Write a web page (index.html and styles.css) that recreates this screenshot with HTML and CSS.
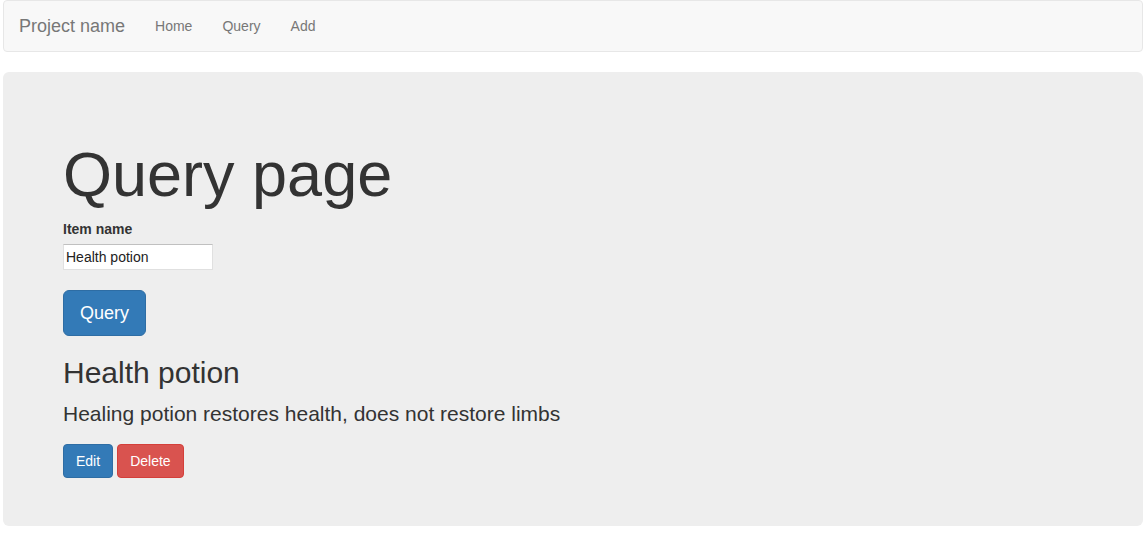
FILE: index.html
```html
<!DOCTYPE html>
<html>
<head>
<meta charset="utf-8">
<title>Query page</title>
<link rel="stylesheet" href="styles.css">
</head>
<body>
<div class="page">
  <nav class="navbar">
    <a class="brand" href="#">Project name</a>
    <ul class="nav">
      <li><a href="#">Home</a></li>
      <li><a href="#">Query</a></li>
      <li><a href="#">Add</a></li>
    </ul>
  </nav>
  <div class="jumbotron">
    <h1>Query page</h1>
    <form class="query-form">
      <label class="label" for="item">Item name</label>
      <input class="input" id="item" type="text" value="Health potion">
      <div class="submit-row">
        <button type="button" class="btn btn-primary btn-lg">Query</button>
      </div>
    </form>
    <h2>Health potion</h2>
    <p class="lead">Healing potion restores health, does not restore limbs</p>
    <div class="actions">
      <button type="button" class="btn btn-primary">Edit</button>
      <button type="button" class="btn btn-danger">Delete</button>
    </div>
  </div>
</div>
</body>
</html>
```

FILE: styles.css
```css
* { box-sizing: border-box; }
html, body { margin: 0; padding: 0; }
body {
  font-family: "Liberation Sans", Arial, Helvetica, sans-serif;
  font-size: 14px;
  line-height: 1.42857143;
  color: #333;
  background: #fff;
}
.page { padding: 0 5px 0 3px; }

.navbar {
  display: flex;
  align-items: center;
  height: 52px;
  background: #f8f8f8;
  border: 1px solid #e7e7e7;
  border-radius: 4px;
  margin-bottom: 20px;
}
.brand {
  display: block;
  padding: 15px;
  font-size: 18px;
  line-height: 20px;
  height: 50px;
  color: #777;
  text-decoration: none;
}
.nav {
  display: flex;
  list-style: none;
  margin: 0;
  padding: 0;
}
.nav a {
  display: block;
  padding: 15px;
  line-height: 20px;
  color: #777;
  text-decoration: none;
}

.jumbotron {
  background: #eee;
  border-radius: 6px;
  padding: 48px 60px;
}
h1 {
  font-size: 63px;
  font-weight: 500;
  line-height: 1.1;
  margin: 20px 0 10px;
  color: inherit;
}
.query-form { display: block; margin: 0; }
.label {
  display: block;
  font-weight: bold;
  margin-bottom: 5px;
  width: max-content;
}
.input {
  display: block;
  width: 150px;
  height: 26px;
  padding: 1px 2px;
  font-family: "Liberation Sans", Arial, sans-serif;
  font-size: 14px;
  color: #222;
  background: #fff;
  border: 1px solid #e0e0e0;
  border-top-color: #c0c0c0;
  margin: 0;
}
.submit-row { padding-top: 20px; }
.btn {
  display: inline-block;
  font-family: "Liberation Sans", Arial, sans-serif;
  font-size: 14px;
  line-height: 1.42857143;
  padding: 6px 12px;
  border: 1px solid transparent;
  border-radius: 4px;
  color: #fff;
  cursor: pointer;
  margin: 0;
}
.btn-lg {
  font-size: 18px;
  line-height: 1.3333333;
  padding: 10px 16px;
  border-radius: 6px;
}
.btn-primary { background: #337ab7; border-color: #2e6da4; }
.btn-danger { background: #d9534f; border-color: #d43f3a; }
h2 {
  font-size: 30px;
  font-weight: 500;
  line-height: 1.1;
  margin: 20px 0 10px;
}
.lead {
  font-size: 21px;
  font-weight: 200;
  margin: 0 0 15px;
}
.actions { display: flex; gap: 4px; }
```
